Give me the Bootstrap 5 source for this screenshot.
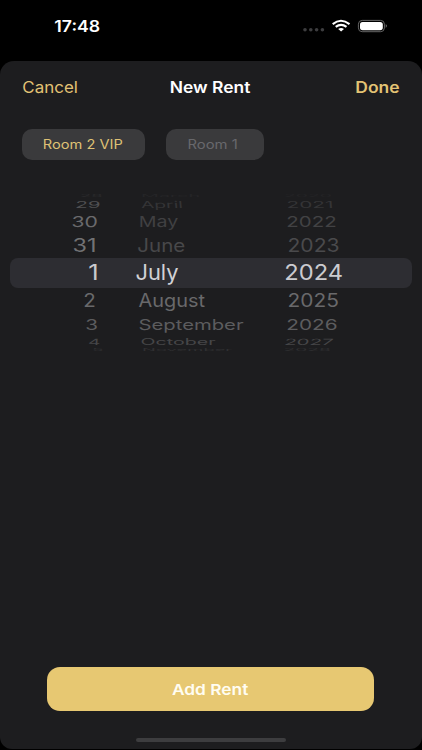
<!DOCTYPE html>
<html lang="en">
<head>
<meta charset="utf-8">
<meta name="viewport" content="width=device-width, initial-scale=1">
<title>New Rent</title>
<link rel="stylesheet" href="https://cdn.jsdelivr.net/npm/bootstrap@5.3.0/dist/css/bootstrap.min.css">
<style>
body{background:#000;font-family:Inter,"Liberation Sans",sans-serif;width:422px;height:750px;overflow:hidden}
.statusbar{height:61px}
.status-icons{margin-right:33px}
.sheet{height:688px;background:#1d1d1f;border-radius:14px 14px 12px 12px}
.titlebar{height:51px}
.gold{color:#e3c374}
.fit{display:block;width:0;white-space:nowrap;transform-origin:0 50%;line-height:1}
.rooms{padding:17px 0 0 22px;gap:21px}
.room{height:31px;border-radius:10px;background:#3a3a3c;border:0;padding:0}
.room-a{width:123px;color:#dfc175}
.room-b{width:98px;color:#68686c}
.wheel{margin-top:31.7px;height:160px;position:relative;isolation:isolate}
.wheel-band{position:absolute;z-index:-1;left:10px;top:66.3px;width:402px;height:30px;border-radius:8px;background:#2d2d32}
.add{width:327px;height:44px;margin:315.3px 0 0 47.4px;border:0;border-radius:13px;background:#e7c872;color:#fffdf2;padding:0}
.home{width:150px;height:4px;border-radius:2px;background:#3d3d3f;margin-top:27.5px}
</style>
</head>
<body>
<header class="statusbar d-flex">
  <div class="flex-fill pt-3">
    <span class="fit text-white fw-semibold mt-1" data-x="54.3" data-w="46" data-size="15.4" data-dy="-0.8">17:48</span>
  </div>
  <svg width="92" height="20" viewBox="0 0 92 20" class="mt-3 status-icons" aria-label="Network and battery">
    <g fill="#3d3d3f"><circle cx="8" cy="13.8" r="1.8"/><circle cx="13.8" cy="13.8" r="1.8"/><circle cx="19.6" cy="13.8" r="1.8"/><circle cx="25.4" cy="13.8" r="1.8"/></g>
    <g fill="none" stroke="#fff" stroke-width="2.1"><path d="M35.7 8.1Q43.9 1.4 52.5 8.1"/><path d="M38.7 10.9Q44.1 6.8 49.5 10.9"/></g>
    <path fill="#fff" d="M41.2 12.9Q44.1 10.9 47 12.9L44.1 15.5Z"/>
    <rect x="61.4" y="4.4" width="26" height="11.3" rx="3.8" fill="none" stroke="#666" stroke-width="1"/>
    <rect x="63" y="6" width="22.8" height="8.2" rx="2.6" fill="#fff"/>
    <path fill="#666" d="M88.7 8.1Q91.4 9.9 88.7 11.9Z"/>
  </svg>
</header>
<main class="sheet d-flex flex-column">
  <nav class="titlebar d-flex align-items-center">
    <span class="fit gold" data-x="22.3" data-w="54.7" data-size="15.7" data-dy="0.6">Cancel</span>
    <span class="fit text-white fw-semibold" data-x="171" data-w="80" data-size="15.4" data-dy="0.6">New Rent</span>
    <span class="fit gold fw-semibold" data-x="356.5" data-w="43" data-size="15.4" data-dy="0.6">Done</span>
  </nav>
  <div class="rooms d-flex">
    <button class="room room-a"><span class="fit" data-x="22" data-w="78.5" data-size="12.8" data-dy="1">Room 2 VIP</span></button>
    <button class="room room-b"><span class="fit" data-x="22.7" data-w="48.8" data-size="12.8" data-dy="1">Room 1</span></button>
  </div>
  <section class="wheel" id="wheel">
    <div class="wheel-band"></div>
  </section>
  <button class="add flex-shrink-0"><span class="fit fw-semibold" data-x="125" data-w="77" data-size="15.2" data-dy="0.9">Add Rent</span></button>
  <div class="home mx-auto flex-shrink-0"></div>
</main>
<script src="https://cdn.jsdelivr.net/npm/bootstrap@5.3.0/dist/js/bootstrap.bundle.min.js"></script>
<script>
// Each row: row height, glyph height, then cells as [text, left, width, colour, skew]
const rows = [
  [6.6, 2.6, ['28',81,21,'#2b2b2d',0], ['March',142,57,'#252527',0], ['2020',285,46,'#242426',0]],
  [12.8, 7, ['29',76.3,23.5,'#505052',-5], ['April',141,41,'#343436',5], ['2021',287.5,44.5,'#343436',4]],
  [21.4, 10.8, ['30',72.5,24.3,'#6a6a6c',-3], ['May',139.7,39,'#404042',0], ['2022',287.3,48.8,'#424244',0]],
  [26, 13.2, ['31',73.7,21.3,'#727274',0], ['June',138.3,46,'#48484a',0], ['2023',288.5,50.3,'#4a4a4c',0]],
  [28, 15.2, ['1',88.3,8.7,'#c9c9cd',0], ['July',136.5,42.5,'#d1d1d5',0], ['2024',285.5,57.3,'#cbcbcf',0]],
  [28.4, 13.2, ['2',84.3,11,'#69696b',0], ['August',138.5,66.7,'#69696b',0], ['2025',288.5,49.8,'#69696b',0]],
  [19.2, 10.5, ['3',86.2,11,'#5c5c5e',0], ['September',139.5,104.3,'#5c5c5e',0], ['2026',287.3,49.5,'#5c5c5e',0]],
  [13.8, 6.3, ['4',89,11,'#464648',-3], ['October',141.5,74.3,'#464648',0], ['2027',285.3,47.5,'#464648',-12]],
  [3.2, 2.6, ['5',93,10,'#303032',0], ['November',143,89.5,'#303032',0], ['2028',284.5,45.5,'#303032',0]]
];
const wheel = document.getElementById('wheel');
rows.forEach(([height, glyph, ...cells]) => {
  const row = document.createElement('div');
  row.className = 'd-flex align-items-center';
  row.style.height = height + 'px';
  cells.forEach(([text, x, w, colour, skew]) => {
    const cell = document.createElement('span');
    cell.className = 'fit';
    cell.textContent = text;
    cell.style.color = colour;
    Object.assign(cell.dataset, {x, w, size: 20.6, sy: glyph / 15, skew, dy: 1});
    row.append(cell);
  });
  wheel.append(row);
});
// Stretch every label to its own width, measured on the visible glyphs
const pen = document.createElement('canvas').getContext('2d');
document.querySelectorAll('.fit').forEach(el => {
  const {x, w, size, sy = 1, skew = 0, dy = 0} = el.dataset;
  el.style.fontSize = size + 'px';
  const cs = getComputedStyle(el);
  pen.font = cs.fontWeight + ' ' + size + 'px ' + cs.fontFamily;
  const m = pen.measureText(el.textContent);
  const sx = w / (m.actualBoundingBoxRight + m.actualBoundingBoxLeft);
  const tx = +x + m.actualBoundingBoxLeft * sx;
  el.style.transform = `translate(${tx}px, ${dy}px) skewX(${skew}deg) scale(${sx}, ${sy})`;
});
</script>
</body>
</html>
